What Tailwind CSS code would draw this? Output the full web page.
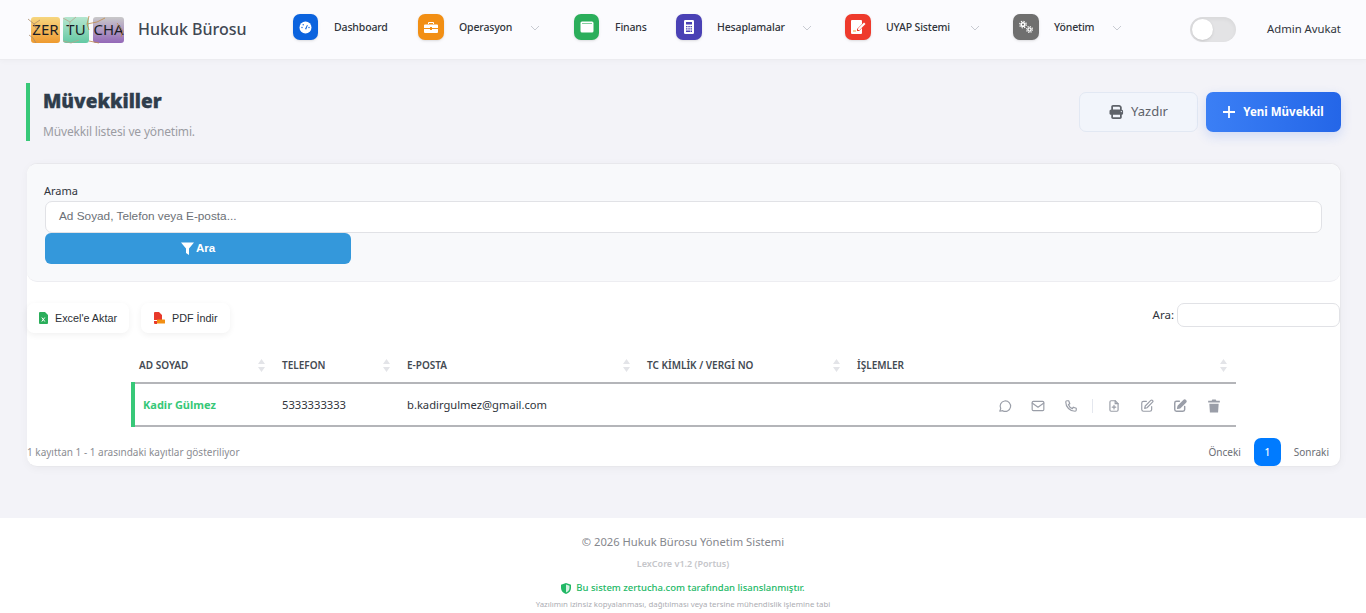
<!DOCTYPE html>
<html lang="tr">
<head>
  <meta charset="UTF-8" />
  <title>Müvekkiller - Hukuk Bürosu</title>
  <script src="https://cdn.jsdelivr.net/npm/@tailwindcss/browser@4"></script>
</head>
<body class="bg-[#f3f3f8] text-[#2c3e50] font-['Noto_Sans',sans-serif] h-[613px] overflow-hidden">
  <!-- Header -->
  <header class="h-[60px] bg-[#fbfbfe] border-b border-[#ececf0] shadow-[0_1px_6px_rgba(0,0,0,0.03)] flex items-center pl-[27px]">
    <!-- Logo -->
    <div class="relative w-[102px] h-[30px] flex items-center gap-[3px] text-[15px] leading-none text-[#1a1d26]">
      <span class="w-[29px] h-[26px] ml-[4px] rounded-[3px] bg-gradient-to-b from-[#f6d67e] to-[#ee9a2e] flex items-center justify-center">ZER</span>
      <span class="w-[26px] h-[26px] rounded-[3px] bg-gradient-to-b from-[#b5e6cf] to-[#62c9a4] flex items-center justify-center">TU</span>
      <span class="w-[31px] h-[26px] rounded-[3px] ml-[1px] bg-gradient-to-b from-[#c9c9c9] to-[#9468b8] flex items-center justify-center">CHA</span>
      <svg class="absolute left-0 top-0" width="102" height="30" viewBox="0 0 102 30" fill="none" stroke-width="0.800">
        <path d="M1 4l6 5 3 6M7 9l6-4M2 20l4 3 3 5" stroke="#a98c6a"/>
        <path d="M36 3l7 4 6-5M43 7l-1 6M36 26l8 2 8-3" stroke="#b7a58c"/>
        <path d="M62 1l-2 8 2 6M60 9l10-2 8-4M62 26l10 2M90 8l6 8-2 6" stroke="#c08a4a"/>
      </svg>
    </div>
    <div class="w-[155px] ml-[9px] text-[16px] font-medium text-[#414853] -mt-[1px]">Hukuk Bürosu</div>

    <!-- Nav -->
    <nav class="flex items-center h-full -mt-[4px] text-[10.500px] tracking-[-0.15px] font-medium text-[#30343b]">
      <a class="w-[125px] flex items-center">
        <span class="w-[25px] h-[26px] -mt-[1px] rounded-[7px] bg-[#0b63de] shadow-sm flex items-center justify-center">
          <svg width="13" height="13" viewBox="0 0 13 13"><circle cx="6.500" cy="6.500" r="6" fill="#fff"/><path d="M6 8l2-4 .8.3L7.200 8.600z" fill="#0b63de"/><circle cx="3" cy="6.500" r="0.700" fill="#0b63de"/><circle cx="4.200" cy="3.800" r="0.700" fill="#0b63de"/><circle cx="10" cy="6.500" r="0.700" fill="#0b63de"/></svg>
        </span>
        <span class="ml-[16px]">Dashboard</span>
      </a>
      <a class="w-[156px] flex items-center">
        <span class="w-[26px] h-[26px] -mt-[1px] rounded-[7px] bg-[#f28f14] shadow-sm flex items-center justify-center">
          <svg width="14" height="13" viewBox="0 0 14 13"><path d="M5 1h4a1 1 0 0 1 1 1v1H9V2H5v1H4V2a1 1 0 0 1 1-1zM1 3.500h12a1 1 0 0 1 1 1V7H8V6H6v1H0V4.500a1 1 0 0 1 1-1zM0 8h6v1h2V8h6v3a1 1 0 0 1-1 1H1a1 1 0 0 1-1-1z" fill="#fff"/></svg>
        </span>
        <span class="ml-[15px]">Operasyon</span>
        <svg class="ml-[18px]" width="10" height="6" viewBox="0 0 10 6" fill="none" stroke="#c8cbd2" stroke-width="1"><path d="M1 1l4 4 4-4"/></svg>
      </a>
      <a class="w-[102px] flex items-center">
        <span class="w-[25px] h-[26px] -mt-[1px] rounded-[7px] bg-[#2bae5b] shadow-sm flex items-center justify-center">
          <svg width="14" height="12" viewBox="0 0 14 12"><rect x="0.500" y="0.500" width="13" height="11" rx="1.500" fill="#fff"/><path d="M2 2.500h10" stroke="#2bae5b" stroke-width="0.600"/></svg>
        </span>
        <span class="ml-[16px]">Finans</span>
      </a>
      <a class="w-[169px] flex items-center">
        <span class="w-[26px] h-[26px] -mt-[1px] rounded-[7px] bg-[#4a41b5] shadow-sm flex items-center justify-center">
          <svg width="10" height="14" viewBox="0 0 10 14"><rect width="10" height="14" rx="1.200" fill="#fff"/><path d="M2 2h6v2.500H2zM2 6h1.500v1.300H2zM4.300 6h1.500v1.300H4.300zM6.500 6H8v1.300H6.500zM2 8.300h1.500v1.300H2zM4.300 8.300h1.500v1.300H4.300zM6.500 8.300H8v1.300H6.500zM2 10.600h4v1.300H2zM6.500 10.600H8v1.300H6.500z" fill="#4a41b5"/></svg>
        </span>
        <span class="ml-[15px]">Hesaplamalar</span>
        <svg class="ml-[17px]" width="10" height="6" viewBox="0 0 10 6" fill="none" stroke="#c8cbd2" stroke-width="1"><path d="M1 1l4 4 4-4"/></svg>
      </a>
      <a class="w-[168px] flex items-center">
        <span class="w-[26px] h-[26px] -mt-[1px] rounded-[7px] bg-[#ee3a2c] shadow-sm flex items-center justify-center">
          <svg width="15" height="14" viewBox="0 0 15 14"><path d="M1 0h9a1 1 0 0 1 1 1v3L6 9v2h2l3-3v5a1 1 0 0 1-1 1H1a1 1 0 0 1-1-1V1a1 1 0 0 1 1-1z" fill="#fff"/><path d="M13 2.500l1.500 1.500L8.500 10H7V8.500z" fill="#fff"/><path d="M2 11h3" stroke="#f2a33a"/></svg>
        </span>
        <span class="ml-[15px]">UYAP Sistemi</span>
        <svg class="ml-[20px]" width="10" height="6" viewBox="0 0 10 6" fill="none" stroke="#c8cbd2" stroke-width="1"><path d="M1 1l4 4 4-4"/></svg>
      </a>
      <a class="w-[177px] flex items-center">
        <span class="w-[26px] h-[26px] -mt-[1px] rounded-[7px] bg-[#6f6f6f] shadow-sm flex items-center justify-center">
          <svg width="16" height="14" viewBox="0 0 16 14" fill="none" stroke="#fff"><circle cx="5" cy="4.500" r="1.800" stroke-width="1.500"/><circle cx="5" cy="4.500" r="3.300" stroke-width="1.200" stroke-dasharray="1.300 1.300"/><circle cx="11.500" cy="9.500" r="1.600" stroke-width="1.400"/><circle cx="11.500" cy="9.500" r="3" stroke-width="1.100" stroke-dasharray="1.200 1.150"/></svg>
        </span>
        <span class="ml-[15px]">Yönetim</span>
        <svg class="ml-[18px]" width="10" height="6" viewBox="0 0 10 6" fill="none" stroke="#c8cbd2" stroke-width="1"><path d="M1 1l4 4 4-4"/></svg>
      </a>
    </nav>

    <!-- Toggle -->
    <div class="w-[46px] h-[25px] rounded-full bg-[#e3e3e5] shadow-inner p-[2px]">
      <div class="w-[21px] h-[21px] rounded-full bg-white shadow"></div>
    </div>
    <div class="ml-[31px] text-[11.300px] text-[#30343b]">Admin Avukat</div>
  </header>

  <main class="pl-[27px] pr-[25px]">
    <!-- Page title -->
    <div class="pt-[23px] flex justify-between items-start">
      <div class="h-[58px] -ml-[1px] border-l-4 border-[#37c878] pl-[13px]">
        <h1 class="text-[19px] leading-[27px] font-black text-[#2f3d4c] mt-[5px] [-webkit-text-stroke:0.3px_#2f3d4c]">Müvekkiller</h1>
        <p class="text-[12px] leading-[16px] text-[#9b9ca3] mt-[9px] tracking-[-0.17px]">Müvekkil listesi ve yönetimi.</p>
      </div>
      <div class="flex gap-[8px] mt-[9px]">
        <button class="w-[119px] h-[40px] rounded-[7px] bg-[#f2f5fb] border border-[#e2e8f3] flex items-center justify-center gap-[7px] text-[13px] text-[#5e6269]">
          <svg width="15" height="14" viewBox="0 0 512 512" fill="#5e6269"><path d="M128 0C93 0 64 29 64 64v96h64V64h227l29 29v67h64V93c0-17-7-33-19-45L403 19C391 7 375 0 358 0zM384 352v96H128v-96zM64 352v96c0 35 29 64 64 64h256c35 0 64-29 64-64v-96h16c18 0 32-14 32-32v-96c0-35-29-64-64-64H64c-35 0-64 29-64 64v96c0 18 14 32 32 32zm368-136a24 24 0 1 1 0 48 24 24 0 1 1 0-48z"/></svg>
          Yazdır
        </button>
        <button class="w-[135px] h-[40px] rounded-[7px] bg-gradient-to-r from-[#3b7ff5] to-[#2466e8] shadow-[0_4px_12px_rgba(37,99,235,0.18)] flex items-center justify-center gap-[8px] text-[11.500px] font-bold text-white">
          <svg width="12" height="12" viewBox="0 0 12 12" stroke="#fff" stroke-width="1.800"><path d="M6 0v12M0 6h12"/></svg>
          Yeni Müvekkil
        </button>
      </div>
    </div>

    <!-- Card -->
    <section class="mt-[22px] h-[304px] rounded-[10px] bg-white border border-[#e8e8ec] border-l-0 shadow-[0_2px_8px_rgba(0,0,0,0.04)] w-[1314px]">
      <!-- Filter -->
      <div class="h-[118px] rounded-[10px] bg-[#f8f9fb] border-b border-[#ededf1] px-[18px] pt-[20px] font-['Liberation_Sans',sans-serif]">
        <label class="block text-[11px] leading-[14px] text-[#30343b] -ml-[1px] font-['Noto_Sans',sans-serif]">Arama</label>
        <div class="mt-[3px] h-[32px] w-[1277px] rounded-[7px] bg-white border border-[#e1e2e6] flex items-center pl-[13px] text-[11.800px] text-[#6b7076]">Ad Soyad, Telefon veya E-posta...</div>
        <button class="w-[306px] h-[31px] rounded-[6px] bg-[#3498db] flex items-center justify-center gap-[2px] text-[11.500px] font-bold text-white">
          <svg width="13" height="13" viewBox="0 0 13 13" fill="#fff"><path d="M0 0.500h13L8 6.500V13L5 11V6.500z"/></svg>
          Ara
        </button>
      </div>

      <!-- Toolbar -->
      <div class="flex justify-between items-start mt-[21px]">
        <div class="flex gap-[12px] font-['Liberation_Sans',sans-serif] text-[10.800px] text-[#2b2f36]">
          <button class="w-[102px] h-[30px] rounded-[7px] bg-white shadow-[0_2px_6px_rgba(0,0,0,0.06)] flex items-center pl-[12px] gap-[7px]">
            <svg width="9" height="12" viewBox="0 0 9 12"><path d="M1 0h5l3 3v8a1 1 0 0 1-1 1H1a1 1 0 0 1-1-1V1a1 1 0 0 1 1-1z" fill="#2bae5b"/><path d="M2.800 5.500l3 4M5.800 5.500l-3 4" stroke="#fff"/></svg>
            Excel'e Aktar
          </button>
          <button class="w-[89px] h-[30px] rounded-[7px] bg-white shadow-[0_2px_6px_rgba(0,0,0,0.06)] flex items-center pl-[13px] gap-[7px]">
            <svg width="11" height="12" viewBox="0 0 11 12"><path d="M1 0h4l3 3v5H0V1a1 1 0 0 1 1-1zM0 9h3v3H1a1 1 0 0 1-1-1z" fill="#e8392b"/><rect x="3" y="7.500" width="8" height="4" rx="0.500" fill="#f28f14"/></svg>
            PDF İndir
          </button>
        </div>
        <div class="flex items-center gap-[3px] text-[11.500px] text-[#30343b]">
          <span>Ara:</span>
          <div class="w-[163px] h-[24px] rounded-[7px] bg-white border border-[#e1e2e6]"></div>
        </div>
      </div>

      <!-- Table -->
      <table class="mt-[16px] ml-[104px] w-[1105px] table-fixed text-[11.200px] text-[#30343b]">
        <thead>
          <tr class="h-[34px] text-[10px] font-semibold text-[#444a52] text-left border-b-2 border-[#b4b5b9]">
            <th class="w-[149px] pl-[6px] font-semibold"><div class="flex justify-between pr-[17px] items-center">AD SOYAD
              <svg width="7" height="13" viewBox="0 0 7 13" fill="#e3e4e8"><path d="M3.500 0L7 5H0zM3.500 13L0 8h7z"/></svg></div></th>
            <th class="w-[125px] font-semibold"><div class="flex justify-between pr-[17px] items-center">TELEFON
              <svg width="7" height="13" viewBox="0 0 7 13" fill="#e3e4e8"><path d="M3.500 0L7 5H0zM3.500 13L0 8h7z"/></svg></div></th>
            <th class="w-[240px] font-semibold"><div class="flex justify-between pr-[17px] items-center">E-POSTA
              <svg width="7" height="13" viewBox="0 0 7 13" fill="#e3e4e8"><path d="M3.500 0L7 5H0zM3.500 13L0 8h7z"/></svg></div></th>
            <th class="w-[210px] font-semibold"><div class="flex justify-between pr-[17px] items-center">TC KİMLİK / VERGİ NO
              <svg width="7" height="13" viewBox="0 0 7 13" fill="#e3e4e8"><path d="M3.500 0L7 5H0zM3.500 13L0 8h7z"/></svg></div></th>
            <th class="font-semibold"><div class="flex justify-between pr-[9px] items-center">İŞLEMLER
              <svg width="7" height="13" viewBox="0 0 7 13" fill="#e3e4e8"><path d="M3.500 0L7 5H0zM3.500 13L0 8h7z"/></svg></div></th>
          </tr>
        </thead>
        <tbody>
          <tr class="h-[43px] border-b-2 border-[#b4b5b9]">
            <td class="pl-[8px] pt-[2px] border-l-4 border-[#37c878] font-bold text-[#37c878] text-[11px]">Kadir Gülmez</td>
            <td class="pt-[2px]">5333333333</td>
            <td class="pt-[2px]">b.kadirgulmez@gmail.com</td>
            <td></td>
            <td class="pt-[2px]">
              <div class="flex items-center justify-end pr-[15px] text-[#9a9ea8]">
                <svg class="w-[14px] h-[14px]" viewBox="0 0 24 24" fill="none" stroke="currentColor" stroke-width="2" stroke-linecap="round" stroke-linejoin="round"><path d="M3 21l1.700-4.500A9 9 0 1 1 8 20z"/></svg>
                <svg class="w-[14px] h-[14px] ml-[19px]" viewBox="0 0 24 24" fill="none" stroke="currentColor" stroke-width="2" stroke-linecap="round" stroke-linejoin="round"><rect x="2" y="4" width="20" height="16" rx="2"/><path d="M2 7l10 7 10-7"/></svg>
                <svg class="w-[14px] h-[14px] ml-[19px]" viewBox="0 0 24 24" fill="none" stroke="currentColor" stroke-width="2" stroke-linecap="round" stroke-linejoin="round"><path d="M5 3h3l2 5-2.500 1.500a11 11 0 0 0 7 7L16 14l5 2v3a2 2 0 0 1-2 2A16 16 0 0 1 3 5a2 2 0 0 1 2-2z"/></svg>
                <span class="w-px h-[14px] bg-[#e4e7ee] ml-[14px]"></span>
                <svg class="w-[14px] h-[14px] ml-[14px]" viewBox="0 0 24 24" fill="none" stroke="currentColor" stroke-width="2" stroke-linecap="round" stroke-linejoin="round"><path d="M14 3v5h5"/><path d="M17 21H7a2 2 0 0 1-2-2V5a2 2 0 0 1 2-2h7l5 5v11a2 2 0 0 1-2 2z"/><path d="M12 11v6M9 14h6"/></svg>
                <svg class="w-[14px] h-[14px] ml-[19px]" viewBox="0 0 24 24" fill="none" stroke="currentColor" stroke-width="2" stroke-linecap="round" stroke-linejoin="round"><path d="M11 4H6a3 3 0 0 0-3 3v11a3 3 0 0 0 3 3h11a3 3 0 0 0 3-3v-5"/><path d="M18.500 2.500a2.100 2.100 0 0 1 3 3L12 15l-4 1 1-4z"/></svg>
                <svg class="w-[14px] h-[14px] ml-[19px]" viewBox="0 0 24 24" fill="none" stroke="currentColor" stroke-width="2.500" stroke-linecap="round" stroke-linejoin="round"><path d="M11 4H6a3 3 0 0 0-3 3v11a3 3 0 0 0 3 3h11a3 3 0 0 0 3-3v-5"/><path d="M18.500 2.500a2.100 2.100 0 0 1 3 3L12 15l-4 1 1-4z" fill="currentColor"/></svg>
                <svg class="w-[14px] h-[14px] ml-[20px]" viewBox="0 0 24 24" fill="currentColor"><path d="M9 1h6l1 2h6v3H2V3h6zM4 8h16l-1 15H5z"/></svg>
              </div>
            </td>
          </tr>
        </tbody>
      </table>

      <!-- Pagination -->
      <div class="flex justify-between items-center mt-[11px] text-[10px]">
        <span class="text-[#8a8c92]">1 kayıttan 1 - 1 arasındaki kayıtlar gösteriliyor</span>
        <div class="flex items-center text-[#6b6e75]">
          <span class="mr-[13px]">Önceki</span>
          <span class="w-[27px] h-[28px] rounded-[7px] bg-[#007bff] text-white flex items-center justify-center font-medium">1</span>
          <span class="ml-[13px] mr-[11px]">Sonraki</span>
        </div>
      </div>
    </section>
  </main>

  <!-- Footer -->
  <footer class="mt-[51px] h-[95px] bg-white text-center pt-[16px]">
    <p class="text-[11.200px] leading-[16px] text-[#85878d]">© 2026 Hukuk Bürosu Yönetim Sistemi</p>
    <p class="text-[9px] leading-[12px] font-semibold text-[#c5c6ca] mt-[8px]">LexCore v1.2 (Portus)</p>
    <p class="text-[9.500px] leading-[14px] font-medium text-[#22b866] mt-[11px] flex items-center justify-center gap-[5px]">
      <svg width="10" height="11" viewBox="0 0 10 11"><path d="M5 0l5 1.800V5c0 3-2 5-5 6-3-1-5-3-5-6V1.800z" fill="#22b866"/><path d="M5 1.500V9.500C7 8.700 8.500 7 8.500 5V2.800z" fill="#d4f3e2"/></svg>
      Bu sistem zertucha.com tarafından lisanslanmıştır.
    </p>
    <p class="text-[7.800px] leading-[12px] text-[#acadb3] mt-[3px]">Yazılımın izinsiz kopyalanması, dağıtılması veya tersine mühendislik işlemine tabi</p>
  </footer>
</body>
</html>
